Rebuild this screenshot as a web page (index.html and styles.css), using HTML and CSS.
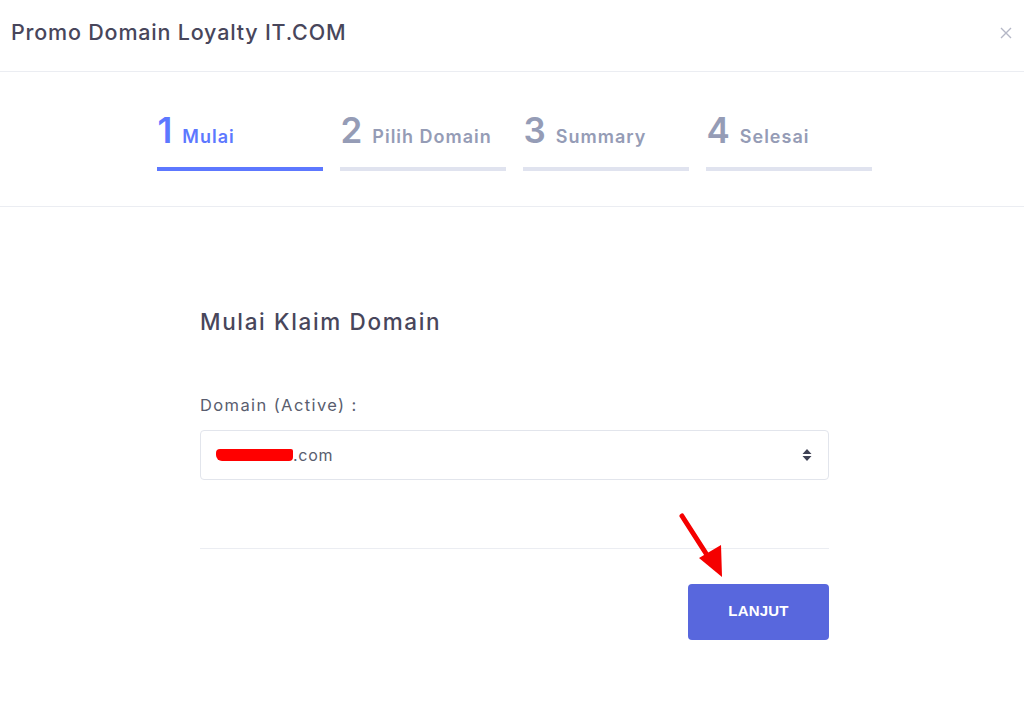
FILE: index.html
```html
<!DOCTYPE html>
<html lang="id">
<head>
<meta charset="utf-8">
<title>Promo Domain Loyalty IT.COM</title>
<link rel="stylesheet" href="styles.css">
</head>
<body>
<div class="modal">
  <div class="modal-header">
    <h3 class="modal-title">Promo Domain Loyalty IT.COM</h3>
    <span class="close" aria-label="Close">
      <svg width="12" height="12" viewBox="0 0 12 12"><path d="M1 1L11 11M11 1L1 11" stroke="#b4b7c6" stroke-width="1.4" fill="none"/></svg>
    </span>
  </div>
  <div class="wizard-nav">
    <div class="step active">
      <div class="step-label"><span class="num">1</span><span class="txt">Mulai</span></div>
      <div class="bar"></div>
    </div>
    <div class="step">
      <div class="step-label"><span class="num">2</span><span class="txt">Pilih Domain</span></div>
      <div class="bar"></div>
    </div>
    <div class="step">
      <div class="step-label"><span class="num">3</span><span class="txt">Summary</span></div>
      <div class="bar"></div>
    </div>
    <div class="step">
      <div class="step-label"><span class="num">4</span><span class="txt">Selesai</span></div>
      <div class="bar"></div>
    </div>
  </div>
  <div class="wizard-body">
    <div class="form">
      <h4 class="form-title">Mulai Klaim Domain</h4>
      <label class="form-label">Domain (Active) :</label>
      <div class="select">
        <span class="select-value"><span class="redact">xxxxxxxxx</span>.com</span>
        <svg class="caret" width="10" height="14" viewBox="0 0 10 14"><path d="M5 1L9.5 6H0.5Z M5 13L0.5 8H9.5Z" fill="#3f4254"/></svg>
      </div>
      <div class="actions">
        <button class="btn">LANJUT</button>
        <svg class="annot" width="60" height="80" viewBox="0 0 60 80">
          <path d="M6 4L31 43" stroke="#f50000" stroke-width="5" stroke-linecap="round" fill="none"/>
          <path d="M23 46L45 33L46 65Z" fill="#f50000"/>
        </svg>
      </div>
    </div>
  </div>
</div>
</body>
</html>
```

FILE: styles.css
```css
* { box-sizing: border-box; }
html, body { margin: 0; padding: 0; background: #fff; }
body {
  font-family: Inter, "Open Sans", sans-serif;
  color: #48465b;
  width: 1024px;
  height: 714px;
  overflow: hidden;
}
.modal { width: 1024px; }
.modal-header {
  height: 72px;
  border-bottom: 1px solid #ebedf2;
  display: flex;
  align-items: center;
  justify-content: space-between;
  padding: 0 12px 8px 11px;
}
.modal-title {
  margin: 0;
  font-size: 21.5px;
  font-weight: 500;
  color: #48465b;
  letter-spacing: 0.8px;
}
.close { display: flex; margin-top: 2px; }
.wizard-nav {
  height: 135px;
  border-bottom: 1px solid #ebedf2;
  display: flex;
  justify-content: center;
  gap: 17px;
  padding: 37px 0 0 4px;
}
.step { width: 166px; display: flex; flex-direction: column; }
.step-label { display: flex; align-items: baseline; height: 56px; }
.num {
  font-size: 35px;
  font-weight: 600;
  color: #959cb6;
  line-height: 43px;
  margin-right: 10px;
  margin-left: 1px;
}
.txt { font-size: 18px; font-weight: 600; color: #959cb6; letter-spacing: 1px; }
.bar { height: 4px; background: #e0e3ef; margin-top: 2px; }
.step.active .num, .step.active .txt { color: #5d78ff; }
.step.active .bar { background: #5d78ff; }
.wizard-body { display: flex; justify-content: center; padding: 0 0 0 5px; }
.form { width: 629px; padding-top: 100px; }
.form-title {
  margin: 0 0 58px;
  font-size: 22.5px;
  font-weight: 500;
  color: #48465b;
  line-height: 30px;
  letter-spacing: 1.65px;
}
.form-label {
  display: block;
  font-size: 16.5px;
  color: #595d6e;
  line-height: 20px;
  margin-bottom: 15px;
  letter-spacing: 1.4px;
}
.select {
  height: 50px;
  border: 1px solid #e2e5ec;
  border-radius: 4px;
  display: flex;
  align-items: center;
  justify-content: space-between;
  padding: 0 16px 0 15px;
}
.select-value { font-size: 16px; color: #595d6e; display: flex; align-items: center; letter-spacing: 0.7px; }
.redact {
  display: inline-block;
  width: 77px;
  height: 12px;
  background: #ff0000;
  color: transparent;
  border-radius: 4px 2px 4px 6px;
  overflow: hidden;
  font-size: 1px;
}
.actions {
  position: relative;
  margin-top: 68px;
  border-top: 1px solid #ebedf2;
  padding-top: 35px;
  display: flex;
  justify-content: flex-end;
}
.btn {
  width: 141px;
  height: 56px;
  border: none;
  border-radius: 4px;
  background: #5867dd;
  color: #fff;
  font-family: "Liberation Sans", Arial, sans-serif;
  font-weight: 700;
  font-size: 15px;
  letter-spacing: 0.2px;
  padding: 0 0 3px;
}
.annot { position: absolute; left: 476px; top: -37px; }
```
